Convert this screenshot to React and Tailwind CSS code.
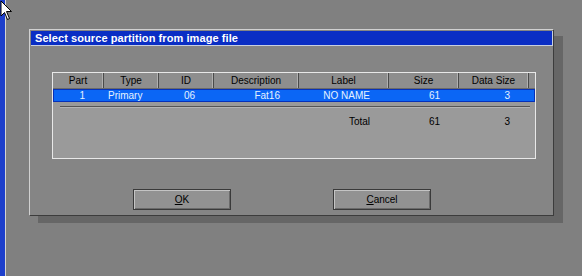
import React from "react";

const cols = [
  { w: 51, h: "Part" },
  { w: 55, h: "Type" },
  { w: 55, h: "ID" },
  { w: 85, h: "Description" },
  { w: 90, h: "Label" },
  { w: 70, h: "Size" },
  { w: 70, h: "Data Size" },
];

const row = ["1", "Primary", "06", "Fat16", "NO NAME", "61", "3"];
const total = ["", "", "", "", "Total", "61", "3"];

export default function App() {
  return (
    <div
      className="relative w-[582px] h-[276px] overflow-hidden bg-[#808080] flex"
      style={{ fontFamily: '"Liberation Sans", Arial, sans-serif' }}
    >
      <div className="w-[5px] h-full bg-[#1d3fcc]" />
      <div className="w-px h-full bg-[#d4d4d4]" />
      <div className="flex-1 pl-[23px] pt-[29px]">
        <div className="w-[525px] h-[187px] bg-[#858585] border border-t-[#d0d0d0] border-l-[#d0d0d0] border-r-[#3c3c3c] border-b-[#3c3c3c] shadow-[9px_7px_0_#666666] flex flex-col">
          <div className="ml-px mt-px h-[15px] bg-[#0a2ec4] border-b border-r border-[#c8d0e0] flex items-center pl-[4px]">
            <span className="text-[11px] font-bold text-white leading-none tracking-[0.08px]">
              Select source partition from image file
            </span>
          </div>
          <div className="ml-[22px] mt-[26px] w-[484px] h-[87px] border border-[#e8e8e8] bg-[#9a9a9a] flex flex-col">
            <div className="flex h-[16px] bg-[#8e8e8e] border-b border-[#6a6a6a]">
              {cols.map((c, i) => (
                <div
                  key={i}
                  style={{ width: c.w }}
                  className="h-full flex items-center justify-center text-[10px] text-black leading-none border-r border-[#4a4a4a] shadow-[inset_-1px_0_0_#b0b0b0]"
                >
                  {c.h}
                </div>
              ))}
              <div className="flex-1" />
            </div>
            <div className="flex h-[13px] bg-[#0b66f5] border border-[#0630b8] text-[#e4f2ff] text-[10px] leading-none">
              {cols.map((c, i) => (
                <div
                  key={i}
                  style={{ width: i === 0 ? c.w - 1 : c.w }}
                  className={
                    i === 1
                      ? "h-full flex items-center pl-[4px]"
                      : "h-full flex items-center justify-end pr-[19px]"
                  }
                >
                  {row[i]}
                </div>
              ))}
            </div>
            <div className="ml-[7px] mt-[4px] w-[470px] h-[2px] border-t border-[#555555] border-b border-b-[#b4b4b4]" />
            <div className="flex mt-[7px] h-[14px] text-black text-[10px] leading-none">
              {cols.map((c, i) => (
                <div
                  key={i}
                  style={{ width: c.w }}
                  className="h-full flex items-center justify-end pr-[19px]"
                >
                  {total[i]}
                </div>
              ))}
            </div>
          </div>
          <div className="flex mt-[30px] ml-[103px] gap-[102px]">
            <button className="w-[98px] h-[21px] bg-[#929292] border border-[#3a3a3a] shadow-[inset_1px_1px_0_#c4c4c4,inset_-1px_-1px_0_#6a6a6a] text-[10px] text-black flex items-center justify-center leading-none">
              <span><span className="underline">O</span>K</span>
            </button>
            <button className="w-[98px] h-[21px] bg-[#929292] border border-[#3a3a3a] shadow-[inset_1px_1px_0_#c4c4c4,inset_-1px_-1px_0_#6a6a6a] text-[10px] text-black flex items-center justify-center leading-none">
              <span><span className="underline">C</span>ancel</span>
            </button>
          </div>
        </div>
      </div>
      <svg
        className="absolute left-0 top-0"
        width="14"
        height="22"
        viewBox="0 0 14 22"
      >
        <path
          d="M1 1 L1 16 L4.5 12.5 L7.5 19.5 L9.5 18.5 L6.5 11.5 L11.5 11.5 Z"
          fill="#ffffff"
          stroke="#000000"
          strokeWidth="1"
          strokeLinejoin="miter"
        />
      </svg>
    </div>
  );
}
